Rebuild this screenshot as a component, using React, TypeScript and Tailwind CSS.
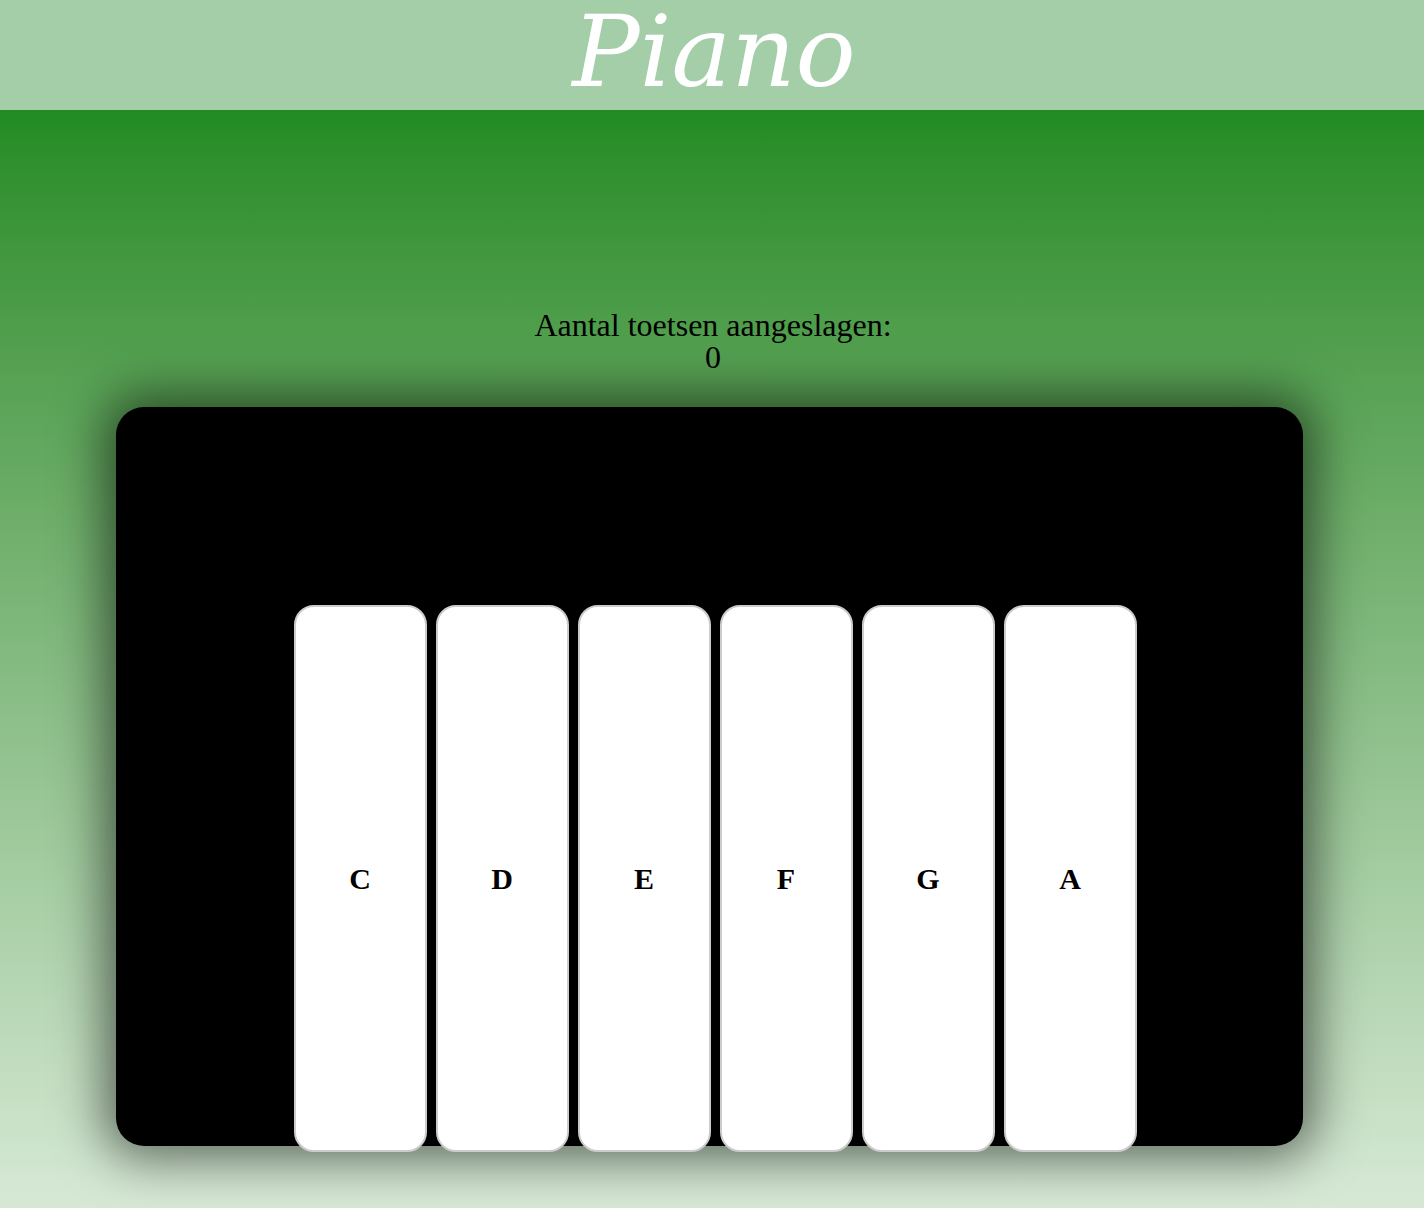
import React, { useState } from "react";

const keys = ["C", "D", "E", "F", "G", "A"];

const App: React.FC = () => {
  const [count, setCount] = useState(0);

  return (
    <div className="min-h-[1208px] flex flex-col font-['Liberation_Serif',serif]">
      {/* Header */}
      <header className="h-[110px] bg-[#a3cea8] flex justify-center">
        <h1 className="text-white italic text-[100px] leading-[110px] font-['DejaVu_Serif',serif] -mt-[3px] pl-[4px]">
          Piano
        </h1>
      </header>

      {/* Main */}
      <main className="flex-1 bg-gradient-to-b from-[#228b22] to-[#d7e9d6] flex flex-col items-center pt-[199px]">
        <div className="text-black text-[32px] leading-[32px] text-center pl-[2px]">
          <div>Aantal toetsen aangeslagen:</div>
          <div>{count}</div>
        </div>

        {/* Piano body */}
        <div className="mt-[34px] mr-[6px] w-[1187px] h-[739px] bg-black rounded-[28px] shadow-[0_0_50px_12px_rgba(0,0,0,0.55)] flex justify-center gap-[9px] pt-[198px] pl-[12px]">
          {keys.map((k) => (
            <button
              key={k}
              onClick={() => setCount((c) => c + 1)}
              className="w-[133px] h-[547px] shrink-0 bg-white border-2 border-[#cccccc] rounded-[20px] flex items-center justify-center text-[30px] font-bold text-black"
            >
              {k}
            </button>
          ))}
        </div>
      </main>
    </div>
  );
};

export default App;
